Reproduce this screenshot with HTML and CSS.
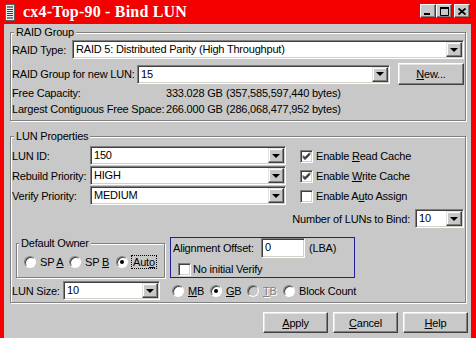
FILE: index.html
```html
<!DOCTYPE html>
<html lang="en">
<head>
    <meta charset="UTF-8">
    <meta name="viewport" content="width=device-width, initial-scale=1.0">
    <title>cx4-Top-90 - Bind LUN</title>
    <link rel="stylesheet" href="styles.css">
</head>
<body>

<div class="window">
    <div class="titlebar">
        <svg class="app-icon" width="10" height="17" viewBox="0 0 10 17">
            <rect x="0.5" y="0.5" width="9" height="16" fill="#e8e8e8" stroke="#606060"/>
            <rect x="2" y="2" width="6" height="2" fill="#808080"/>
            <rect x="2" y="5" width="6" height="1" fill="#404040"/>
            <rect x="2" y="7" width="6" height="1" fill="#404040"/>
            <rect x="2" y="9" width="6" height="1" fill="#404040"/>
            <rect x="2" y="11" width="6" height="1" fill="#404040"/>
            <rect x="2" y="13" width="6" height="2" fill="#808080"/>
        </svg>
        <span class="title">cx4-Top-90 - Bind LUN</span>
        <div class="caption-btns">
            <span class="cap-btn">
                <svg width="8" height="8" viewBox="0 0 8 8"><rect x="0" y="6" width="6" height="2" fill="#000"/></svg>
            </span>
            <span class="cap-btn">
                <svg width="9" height="9" viewBox="0 0 9 9"><path d="M0.5 1.5h8v7h-8z" fill="none" stroke="#000"/><rect x="0" y="0" width="9" height="2" fill="#000"/></svg>
            </span>
            <span class="cap-btn close">
                <svg width="8" height="7" viewBox="0 0 8 7"><path d="M0.5 0.5l7 6M7.5 0.5l-7 6" stroke="#000" stroke-width="1.8"/></svg>
            </span>
        </div>
    </div>

    <div class="client">
        <div class="group raid-group">
            <span class="legend">RAID Group</span>
            <div class="row row-type">
                <span class="lbl lbl-type">RAID Type:</span>
                <div class="combo combo-type"><span class="val">RAID 5: Distributed Parity (High Throughput)</span><span class="arrow"></span></div>
            </div>
            <div class="row row-rg">
                <span class="lbl lbl-rg">RAID Group for new LUN:</span>
                <div class="combo combo-rg"><span class="val">15</span><span class="arrow"></span></div>
                <button class="btn btn-new"><u>N</u>ew...</button>
            </div>
            <div class="info">
                <span>Free Capacity:</span><span>333.028 GB</span><span>(357,585,597,440 bytes)</span>
                <span>Largest Contiguous Free Space:</span><span>266.000 GB</span><span>(286,068,477,952 bytes)</span>
            </div>
        </div>

        <div class="group lun-group">
            <span class="legend">LUN Properties</span>
            <div class="props">
                <div class="prio">
                    <div class="prow">
                        <span class="lbl lbl-prio">LUN ID:</span>
                        <div class="combo combo-prio"><span class="val">150</span><span class="arrow"></span></div>
                    </div>
                    <div class="prow">
                        <span class="lbl lbl-prio">Rebuild Priority:</span>
                        <div class="combo combo-prio"><span class="val">HIGH</span><span class="arrow"></span></div>
                    </div>
                    <div class="prow">
                        <span class="lbl lbl-prio">Verify Priority:</span>
                        <div class="combo combo-prio"><span class="val">MEDIUM</span><span class="arrow"></span></div>
                    </div>
                </div>
                <div class="checks">
                    <div class="check">
                        <span class="box"><svg width="11" height="11" viewBox="0 0 11 11"><path d="M2 4.5l2 2 5-5M2 5.5l2 2 5-5M2 6.5l2 2 5-5" fill="none" stroke="#000" stroke-width="1"/></svg></span>
                        <span>Enable <u>R</u>ead Cache</span>
                    </div>
                    <div class="check">
                        <span class="box"><svg width="11" height="11" viewBox="0 0 11 11"><path d="M2 4.5l2 2 5-5M2 5.5l2 2 5-5M2 6.5l2 2 5-5" fill="none" stroke="#000" stroke-width="1"/></svg></span>
                        <span>Enable <u>W</u>rite Cache</span>
                    </div>
                    <div class="check">
                        <span class="box"></span>
                        <span>Enable A<u>u</u>to Assign</span>
                    </div>
                </div>
            </div>

            <div class="bind-row">
                <span class="lbl-bind">Number of LUNs to Bind:</span>
                <div class="combo combo-bind"><span class="val">10</span><span class="arrow"></span></div>
            </div>

            <div class="owner-row">
                <div class="group owner-group">
                    <span class="legend">Default Owner</span>
                    <div class="radios">
                        <div class="radio r-spa"><span class="dot"></span><span>SP <u>A</u></span></div>
                        <div class="radio r-spb"><span class="dot"></span><span>SP <u>B</u></span></div>
                        <div class="radio"><span class="dot on"></span><span class="focus">Aut<u>o</u></span></div>
                    </div>
                </div>
                <div class="align-box">
                    <div class="align-row">
                        <span class="lbl-align">Alignment Offset:</span>
                        <div class="edit">0</div>
                        <span class="lba">(LBA)</span>
                    </div>
                    <div class="check check-verify">
                        <span class="box"></span>
                        <span>No initial Verify</span>
                    </div>
                </div>
            </div>

            <div class="size-row">
                <span class="lbl lbl-size">LUN Size:</span>
                <div class="combo combo-size"><span class="val">10</span><span class="arrow"></span></div>
                <div class="units">
                    <div class="radio r-mb"><span class="dot"></span><span><u>M</u>B</span></div>
                    <div class="radio r-gb"><span class="dot on"></span><span><u>G</u>B</span></div>
                    <div class="radio r-tb disabled"><span class="dot"></span><span><u>T</u>B</span></div>
                    <div class="radio"><span class="dot"></span><span>Block Count</span></div>
                </div>
            </div>
        </div>

        <div class="buttons">
            <button class="btn btn-dlg"><u>A</u>pply</button>
            <button class="btn btn-dlg"><u>C</u>ancel</button>
            <button class="btn btn-dlg"><u>H</u>elp</button>
        </div>
    </div>
</div>

</body>
</html>
```

FILE: styles.css
```css
* {
    box-sizing: border-box;
}

body {
    margin: 0;
    background: #c8c8c8;
    font-family: "Liberation Sans", Arial, sans-serif;
    font-size: 11px;
    letter-spacing: -0.2px;
    color: #000;
}

.window {
    width: 476px;
    height: 338px;
    background: #f40000;
    padding: 0 5px 0 4px;
    display: flex;
    flex-direction: column;
    overflow: hidden;
}

/* title bar */
.titlebar {
    height: 24px;
    flex: none;
    display: flex;
    align-items: center;
    padding-left: 1px;
}

.app-icon {
    margin-right: 8px;
}

.title {
    font-family: "Liberation Serif", "Times New Roman", serif;
    font-weight: bold;
    font-size: 16px;
    letter-spacing: 0.2px;
    color: #fff;
    flex: 1;
}

.caption-btns {
    display: flex;
    margin-right: 1px;
    margin-top: -2px;
}

.cap-btn {
    width: 16px;
    height: 14px;
    display: flex;
    align-items: center;
    justify-content: center;
    background: #c8c8c8;
    border: 1px solid;
    border-color: #fff #404040 #404040 #fff;
    box-shadow: inset -1px -1px #808080;
}

.cap-btn.close {
    margin-left: 2px;
}

/* client area */
.client {
    flex: 1;
    background: #c8c8c8;
    padding-top: 8px;
}

.group {
    border: 1px solid #808080;
    box-shadow: inset 1px 1px #fff, 1px 1px #fff;
}

.legend {
    display: table;
    margin: -7px 0 0 2px;
    padding: 0 2px;
    line-height: 13px;
    background: #c8c8c8;
}

.raid-group,
.lun-group {
    margin-left: 6px;
    width: 456px;
    padding: 0 0 0 1px;
}

.raid-group {
    padding-bottom: 3px;
}

.row {
    display: flex;
    align-items: center;
}

.row-type {
    margin-top: 1px;
    height: 19px;
}

.row-rg {
    margin-top: 4px;
    height: 22px;
}

.lbl {
    flex: none;
    white-space: nowrap;
}

.lbl-type { width: 60px; }
.lbl-rg { width: 125px; }
.lbl-prio { width: 78px; }
.lbl-size { width: 51px; }

/* combo boxes */
.combo {
    display: flex;
    height: 19px;
    flex: none;
    background: #fff;
    border: 1px solid;
    border-color: #808080 #fff #fff #808080;
    box-shadow: inset 1px 1px #404040, inset -1px -1px #d4d0c8;
    padding: 1px;
}

.combo .val {
    flex: 1;
    padding-left: 2px;
    line-height: 15px;
    white-space: nowrap;
    overflow: hidden;
}

.combo .arrow {
    width: 16px;
    display: flex;
    align-items: center;
    justify-content: center;
    background: #c8c8c8;
    border: 1px solid;
    border-color: #e4e4e4 #404040 #404040 #e4e4e4;
    box-shadow: inset -1px -1px #808080, inset 1px 1px #fff;
}

.combo .arrow::after {
    content: "";
    border-style: solid;
    border-width: 4px 4px 0;
    border-color: #000 transparent transparent;
}

.combo-type { width: 392px; }
.combo-rg { width: 253px; }
.combo-prio { width: 196px; }
.combo-bind { width: 49px; }
.combo-size { width: 97px; }

/* buttons */
.btn {
    font: inherit;
    letter-spacing: inherit;
    color: #000;
    background: #c8c8c8;
    border: 1px solid;
    border-color: #fff #404040 #404040 #fff;
    box-shadow: inset -1px -1px #808080, inset 1px 1px #e4e4e4;
    padding: 0;
}

.btn-new {
    width: 66px;
    height: 22px;
    margin-left: 8px;
}

.info {
    display: grid;
    grid-template-columns: 154px 60px auto;
    line-height: 16px;
}

/* LUN properties */
.lun-group {
    margin-top: 15px;
    padding-bottom: 2px;
}

.props {
    display: flex;
    margin-top: 3px;
}

.prow {
    display: flex;
    align-items: center;
    height: 19px;
    margin-bottom: 1px;
}

.checks {
    margin-left: 14px;
}

.check {
    display: flex;
    align-items: center;
    height: 20px;
}

.box {
    width: 13px;
    height: 13px;
    flex: none;
    margin-right: 3px;
    background: #fff;
    border: 1px solid;
    border-color: #808080 #fff #fff #808080;
    box-shadow: inset 1px 1px #404040, inset -1px -1px #d4d0c8;
    display: flex;
    align-items: center;
    justify-content: center;
}

.bind-row {
    display: flex;
    align-items: center;
    justify-content: flex-end;
    height: 19px;
    margin-top: 3px;
    padding-right: 1px;
}

.lbl-bind {
    margin-right: 5px;
}

.owner-row {
    display: flex;
    align-items: flex-start;
    margin-top: 9px;
}

.owner-group {
    width: 149px;
    height: 35px;
    margin: 6px 0 0 4px;
}

.radios {
    display: flex;
    align-items: center;
    height: 20px;
    margin-top: 2px;
    padding-left: 7px;
}

.radio {
    display: flex;
    align-items: center;
    flex: none;
}

.dot {
    width: 12px;
    height: 12px;
    margin-right: 4px;
    border-radius: 50%;
    background: #fff;
    border: 1px solid;
    border-color: #808080 #fff #fff #808080;
    box-shadow: inset 1px 1px #404040;
    display: flex;
    align-items: center;
    justify-content: center;
}

.dot.on::after {
    content: "";
    width: 4px;
    height: 4px;
    border-radius: 50%;
    background: #000;
}

.r-spa { width: 45px; }
.r-spb { width: 47px; }

.focus {
    outline: 1px dotted #000;
    padding: 0 1px;
}

.align-box {
    width: 185px;
    height: 41px;
    margin-left: 5px;
    border: 1px solid #1f1f9e;
    padding-left: 2px;
}

.align-row {
    display: flex;
    align-items: center;
    height: 20px;
}

.lbl-align {
    width: 88px;
}

.edit {
    width: 44px;
    height: 20px;
    background: #fff;
    border: 1px solid;
    border-color: #808080 #fff #fff #808080;
    box-shadow: inset 1px 1px #404040, inset -1px -1px #d4d0c8;
    padding-left: 3px;
    line-height: 17px;
}

.lba {
    margin-left: 4px;
}

.check-verify {
    height: 16px;
    margin-top: 3px;
    padding-left: 5px;
}

.check-verify .box {
    margin-right: 2px;
}

.size-row {
    display: flex;
    align-items: center;
    height: 19px;
    margin-top: 3px;
}

.units {
    display: flex;
    align-items: center;
    margin-left: 12px;
}

.r-mb { width: 38px; }
.r-gb { width: 37px; }
.r-tb { width: 36px; }

.disabled .dot {
    background: #c8c8c8;
}

.disabled span:last-child {
    color: #808080;
    text-shadow: 1px 1px #fff;
}

.buttons {
    display: flex;
    justify-content: flex-end;
    gap: 5px;
    margin-top: 9px;
    padding-right: 3px;
}

.btn-dlg {
    width: 65px;
    height: 21px;
}
```
